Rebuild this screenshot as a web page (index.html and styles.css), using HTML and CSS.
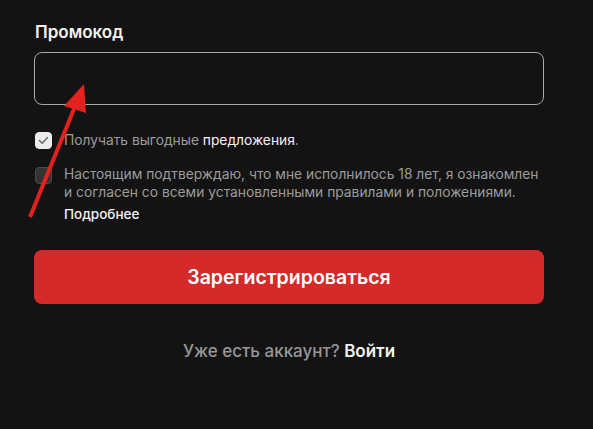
FILE: index.html
```html
<!DOCTYPE html>
<html lang="ru">
<head>
<meta charset="utf-8">
<link rel="stylesheet" href="styles.css">
</head>
<body>
<div class="form">
  <label class="label">Промокод</label>
  <div class="input"></div>
  <div class="check-row first">
    <span class="box checked">
      <svg width="11" height="9" viewBox="0 0 11 9"><path d="M1.5 4.6 L4.2 7.2 L9.5 1.6" fill="none" stroke="#6a6a6a" stroke-width="1.5" stroke-linecap="round" stroke-linejoin="round"/></svg>
    </span>
    <span class="check-text">Получать выгодные <span class="strong">предложения</span>.</span>
  </div>
  <div class="check-row second">
    <span class="box"></span>
    <div class="check-text">
      Настоящим подтверждаю, что мне исполнилось 18 лет, я ознакомлен и согласен со всеми установленными правилами и положениями.
      <div class="more">Подробнее</div>
    </div>
  </div>
  <button class="submit">Зарегистрироваться</button>
  <p class="login">Уже есть аккаунт? <span class="login-link">Войти</span></p>
</div>
<svg class="arrow" width="593" height="429" viewBox="0 0 593 429">
  <line x1="30" y1="217" x2="76" y2="104" stroke="#e3211f" stroke-width="4"/>
  <polygon points="84,84 64,106 86,113" fill="#e3211f"/>
</svg>
</body>
</html>
```
FILE: styles.css
```css
html, body {
  margin: 0;
  padding: 0;
  background: #131313;
}
body {
  width: 593px;
  height: 429px;
  overflow: hidden;
  position: relative;
  font-family: Inter, "Noto Sans", sans-serif;
}
.form {
  padding: 22px 49px 0 34px;
  display: flex;
  flex-direction: column;
}
.label {
  color: #f2f2f2;
  font-size: 17px;
  font-weight: 600;
  line-height: 20px;
  padding-left: 1px;
}
.input {
  margin-top: 10px;
  height: 51px;
  border: 1px solid #a9a9a9;
  border-radius: 8px;
}
.check-row {
  display: flex;
  align-items: flex-start;
  padding-left: 1px;
}
.check-row.first {
  margin-top: 26px;
}
.check-row.second {
  margin-top: 16px;
}
.box {
  flex: 0 0 auto;
  width: 17px;
  height: 17px;
  box-sizing: border-box;
  border-radius: 4px;
  border: 1px solid #4a4a4a;
  background: #333;
  display: flex;
  align-items: center;
  justify-content: center;
  margin-right: 12px;
}
.first .box {
  margin-top: 1px;
}
.second .box {
  margin-top: 2px;
}
.box.checked {
  background: #ececec;
  border-color: #ececec;
}
.check-text {
  color: #9c9c9c;
  font-size: 13.8px;
  line-height: 18px;
}
.strong {
  color: #f2f2f2;
}
.more {
  color: #f2f2f2;
  font-weight: 500;
  font-size: 13.5px;
  margin-top: 4px;
}
.submit {
  margin-top: 27px;
  height: 54px;
  border: none;
  border-radius: 8px;
  background: #d42a2a;
  color: #fff;
  font-family: Inter, "Noto Sans", sans-serif;
  font-size: 19.5px;
  font-weight: 600;
}
.login {
  margin: 37px 0 0;
  text-align: center;
  color: #979797;
  font-size: 17px;
  font-weight: 500;
  line-height: 20px;
}
.login-link {
  color: #f2f2f2;
  font-weight: 600;
}
.arrow {
  position: absolute;
  left: 0;
  top: 0;
  pointer-events: none;
}
```
